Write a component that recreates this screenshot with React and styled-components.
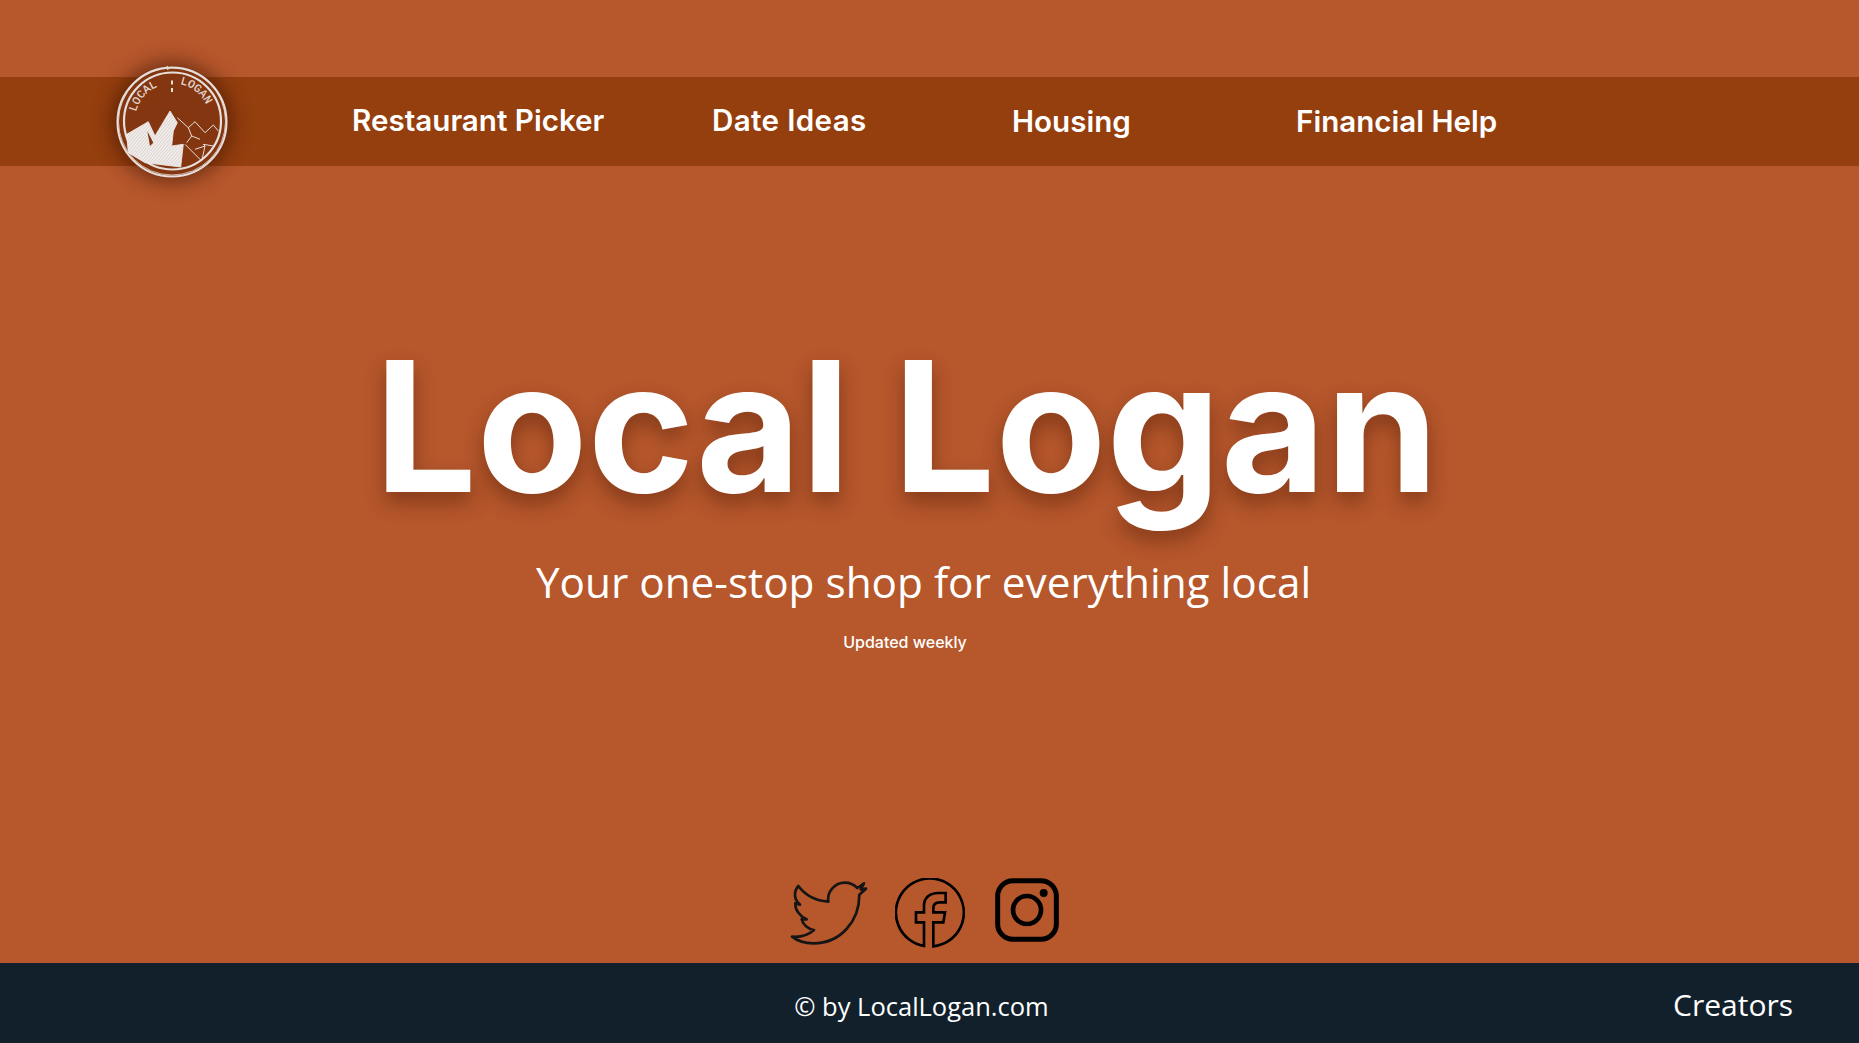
import React from 'react';
import styled, { createGlobalStyle } from 'styled-components';

const GlobalStyle = createGlobalStyle`
	html, body, #root {
		height: 100%;
		margin: 0;
	}
	body {
		background: #b6572c;
		overflow: hidden;
	}
`;

const Page = styled.div`
	height: 1043px;
	display: flex;
	flex-direction: column;
	padding-top: 77px;
	box-sizing: border-box;
`;

const NavBar = styled.nav`
	height: 89px;
	flex: none;
	background: #953e0e;
	display: flex;
	align-items: center;
	padding-left: 116px;
`;

const LogoBadge = styled.div`
	width: 112px;
	height: 112px;
	flex: none;
	border-radius: 50%;
	margin-right: 124px;
	background: #843610;
	box-shadow: 0 0 18px 5px rgba(60, 20, 0, 0.55);
`;

const LogoSvg = styled.svg`
	display: block;
	width: 100%;
	height: 100%;
	overflow: visible;
`;

const NavLink = styled.a`
	flex: none;
	width: ${p => p.$width}px;
	padding-top: ${p => p.$drop}px;
	padding-bottom: 3px;
	font-family: Inter, "Liberation Sans", sans-serif;
	font-size: 29.6px;
	font-weight: 600;
	letter-spacing: ${p => p.$spacing || 0}px;
	color: #fff;
	white-space: nowrap;
`;

const Main = styled.main`
	flex: 1;
	display: flex;
	flex-direction: column;
	align-items: center;
`;

const Title = styled.h1`
	margin: 152px 0 0;
	padding-right: 46px;
	font-family: Inter, "Liberation Sans", sans-serif;
	font-size: 181px;
	font-weight: 700;
	line-height: 218px;
	color: #fff;
	white-space: nowrap;
	text-shadow: 0 10px 20px rgba(70, 25, 0, 0.45);
`;

const Tagline = styled.p`
	margin: 16px 0 0;
	padding-right: 12px;
	font-family: "Open Sans", "Liberation Sans", sans-serif;
	font-size: 42.3px;
	font-weight: 400;
	line-height: 60px;
	color: #fff;
`;

const Updated = styled.div`
	margin-top: 20px;
	padding-right: 49px;
	font-family: Inter, "Liberation Sans", sans-serif;
	font-size: 16px;
	font-weight: 500;
	line-height: 20px;
	color: #fff;
`;

const Socials = styled.div`
	margin-top: auto;
	margin-bottom: 15px;
	display: flex;
	align-items: flex-start;
	gap: 27px;
	padding-right: 10px;
`;

const SocialIcon = styled.svg`
	display: block;
	width: ${p => p.$w}px;
	height: ${p => p.$h}px;
	margin-top: ${p => p.$top}px;
	margin-left: ${p => p.$left || 0}px;
	fill: none;
`;

const Footer = styled.footer`
	height: 80px;
	flex: none;
	background: #12202b;
	display: grid;
	grid-template-columns: 1fr auto 1fr;
	align-items: center;
	padding-right: 66px;
	color: #fff;
	font-family: "Open Sans", "Liberation Sans", sans-serif;
`;

const Copyright = styled.div`
	grid-column: 2;
	margin-left: 50px;
	padding-top: 6px;
	font-size: 25.5px;
	font-weight: 400;
`;

const Creators = styled.a`
	grid-column: 3;
	justify-self: end;
	padding-top: 2px;
	font-size: 30px;
	font-weight: 500;
`;

const Logo = () => (
	<LogoSvg viewBox="116 65 112 112">
		<defs>
			<path id="logo-left" d="M136 111 A37 37 0 0 1 167 83" />
			<path id="logo-right" d="M180 83 A37 37 0 0 1 209 112" />
			<pattern id="hatch" width="2.4" height="2.4" patternUnits="userSpaceOnUse" patternTransform="rotate(40)">
				<rect width="2.4" height="2.4" fill="#f1edeb" />
				<line x1="0" y1="0" x2="0" y2="2.4" stroke="#b5a69f" strokeWidth="0.6" />
			</pattern>
		</defs>
		<circle cx="172" cy="121" r="54.5" stroke="#e6dfdb" strokeWidth="2" fill="none" />
		<circle cx="172" cy="120.5" r="53.5" stroke="#e6dfdb" strokeWidth="0.8" fill="none" />
		<circle cx="172.5" cy="120" r="48.5" stroke="#e6dfdb" strokeWidth="2.2" fill="none" />
		<path d="M167 65 L168 69" stroke="#e6dfdb" strokeWidth="1.2" />
		<text fontFamily="'Liberation Mono', monospace" fontSize="11.5" fill="#e6dfdb" stroke="#e6dfdb" strokeWidth="0.2">
			<textPath href="#logo-left">LOCAL</textPath>
		</text>
		<text fontFamily="'Liberation Mono', monospace" fontSize="11.5" fill="#e6dfdb" stroke="#e6dfdb" strokeWidth="0.2">
			<textPath href="#logo-right">LOGAN</textPath>
		</text>
		<path d="M172 79.5 v4 M172 87 v4" stroke="#e6dfdb" strokeWidth="2" />
		<path
			d="M126.7 133.3 L148.3 120.7 L155 135 L170 110 L177.3 121.7 L173.3 130 L171.7 145 L183.3 143.3 L180.7 166 L145 161.7 L128.3 151.7 Z"
			fill="url(#hatch)"
			stroke="#f1edeb"
			strokeWidth="0.8"
		/>
		<path d="M147.3 130 L153.3 141.7 L150 145 Z" fill="#843610" />
		<path
			d="M177.3 116.7 L188.3 126.7 L195 120.7 L205 131.7 L213.3 124 L218.3 130 M188.3 126.7 L191.7 135 L186.7 141.7 M191.7 135 L200 138.3 M185 143.3 L201.7 160 L205 145 L195 148.3 M205 145 L203.3 143.3 L213.3 145"
			stroke="#e6dfdb"
			strokeWidth="1"
			fill="none"
		/>
	</LogoSvg>
);

const TwitterIcon = () => (
	<SocialIcon $w={78} $h={66} $top={2} viewBox="60 60 234 198">
		<path
			d="M85 78 C105 105 135 122 175 125 C170 95 195 68 225 68 C240 68 252 74 262 84 L282 70 L272 88 L288 86 L268 104 C268 180 215 250 130 250 C105 250 85 245 66 230 C90 232 115 225 132 210 C115 208 100 195 95 178 L110 178 C90 170 75 150 76 130 L90 134 C72 120 70 95 85 78 Z"
			stroke="#151515"
			strokeWidth="8"
			strokeLinejoin="round"
		/>
	</SocialIcon>
);

const FacebookIcon = () => (
	<SocialIcon $w={70} $h={70} $top={0} viewBox="375 52 210 210">
		<path
			d="M462 256 A102 102 0 1 1 490 257 V185 H520 L525 155 H490 V142 C490 130 497 125 510 125 H527 V97 H505 C480 97 462 110 462 135 V155 H438 V185 H462 Z"
			stroke="#000"
			strokeWidth="8"
		/>
	</SocialIcon>
);

const InstagramIcon = () => (
	<SocialIcon $w={64} $h={64} $top={0} $left={3} viewBox="675 53 192 192">
		<rect x="683" y="61" width="176" height="176" rx="46" stroke="#000" strokeWidth="15" />
		<circle cx="771" cy="149" r="42" stroke="#000" strokeWidth="14" />
		<circle cx="821" cy="98" r="12" fill="#000" />
	</SocialIcon>
);

const navItems = [
	{ label: 'Restaurant Picker', width: 360, drop: 0 },
	{ label: 'Date Ideas', width: 300, drop: 0, spacing: 0.35 },
	{ label: 'Housing', width: 284, drop: 1 },
	{ label: 'Financial Help', width: 204, drop: 1 },
];

const App = () => {
	return (
		<Page>
			<GlobalStyle />
			<NavBar>
				<LogoBadge><Logo /></LogoBadge>
				{navItems.map(item => (
					<NavLink key={item.label} $width={item.width} $drop={item.drop} $spacing={item.spacing}>{item.label}</NavLink>
				))}
			</NavBar>
			<Main>
				<Title>Local Logan</Title>
				<Tagline>Your one-stop shop for everything local</Tagline>
				<Updated>Updated weekly</Updated>
				<Socials>
					<TwitterIcon />
					<FacebookIcon />
					<InstagramIcon />
				</Socials>
			</Main>
			<Footer>
				<Copyright>© by LocalLogan.com</Copyright>
				<Creators>Creators</Creators>
			</Footer>
		</Page>
	);
};

export default App;
